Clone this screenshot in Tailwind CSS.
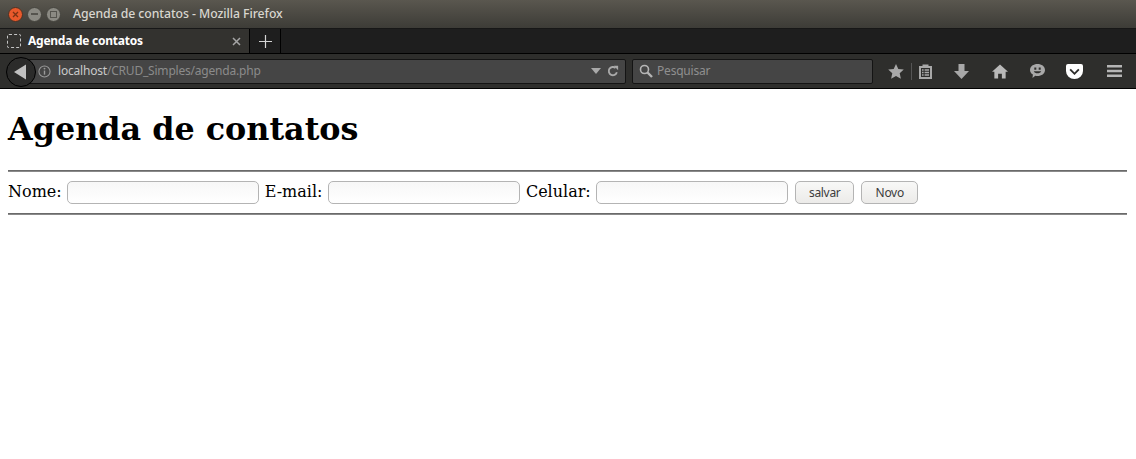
<!DOCTYPE html>
<html lang="pt-BR">
<head>
    <meta charset="UTF-8">
    <title>Agenda de contatos</title>
    <script src="https://cdn.jsdelivr.net/npm/@tailwindcss/browser@4"></script>
</head>
<body class="bg-white h-[459px] overflow-hidden font-['Noto_Sans',sans-serif]">
    <!-- barra de titulo -->
    <div class="h-[28px] flex items-center bg-gradient-to-b from-[#5a574f] to-[#3d3c37]">
        <div class="flex items-center gap-[4px] pl-[8px] w-[73px]">
            <span class="w-[15px] h-[15px] rounded-full bg-[#e9592b] border border-[#4a3225] flex items-center justify-center">
                <svg width="7" height="7" viewBox="0 0 7 7"><path d="M1 1l5 5M6 1l-5 5" stroke="#7a3214" stroke-width="1.3"/></svg>
            </span>
            <span class="w-[15px] h-[15px] rounded-full bg-[#8b8a83] border border-[#45443e] flex items-center justify-center">
                <span class="w-[7px] h-[2px] bg-[#55544e]"></span>
            </span>
            <span class="w-[15px] h-[15px] rounded-full bg-[#8b8a83] border border-[#45443e] flex items-center justify-center">
                <span class="w-[7px] h-[7px] border border-[#55544e]"></span>
            </span>
        </div>
        <span class="text-[12.25px] tracking-[-0.06px] font-medium text-[#d8d6cf] whitespace-nowrap">Agenda de contatos - Mozilla Firefox</span>
    </div>

    <!-- abas -->
    <div class="h-[25px] flex bg-[#1e1e1e] border-t border-[#171717]">
        <div class="w-[250px] flex items-center bg-[#33322f] border-r border-black pl-[7px] pr-[8px]">
            <span class="w-[14px] h-[14px] rounded-[2px] border border-dashed border-[#c4c4c4]"></span>
            <span class="ml-[7px] text-[12px] tracking-[-0.25px] font-bold text-white whitespace-nowrap">Agenda de contatos</span>
            <svg class="ml-auto" width="9" height="9" viewBox="0 0 9 9"><path d="M1 1l7 7M8 1l-7 7" stroke="#a5a5a5" stroke-width="1.5"/></svg>
        </div>
        <div class="w-[31px] flex items-center justify-center border-r border-black">
            <svg width="13" height="13" viewBox="0 0 13 13"><path d="M6.5 0v13M0 6.5h13" stroke="#d4d4d4" stroke-width="1.2"/></svg>
        </div>
    </div>

    <!-- navegacao -->
    <div class="relative h-[36px] flex items-center bg-[#2e2e2c] border-y border-black pl-[22px] pr-[14px]">
        <div class="absolute left-[6px] top-[3px] w-[30px] h-[30px] rounded-full bg-[#2b2b2a] border border-black flex items-center justify-center z-10">
            <svg class="mr-[2px]" width="14" height="16" viewBox="0 0 14 16"><path d="M1 8l12-7.500v15z" fill="#c0c0c0"/></svg>
        </div>
        <div class="w-[604px] h-[25px] flex items-center bg-[#454545] border border-[#141414] rounded-[2px] pl-[15px] pr-[6px]">
            <svg width="13" height="13" viewBox="0 0 14 14" fill="none"><circle cx="7" cy="7" r="6" stroke="#9a9a9a" stroke-width="1.1"/><path d="M7 6v4.400" stroke="#9a9a9a" stroke-width="1.5"/><circle cx="7" cy="3.900" r="1" fill="#9a9a9a"/></svg>
            <span class="ml-[7px] text-[12px] tracking-[-0.2px] text-[#c9c9c9] whitespace-nowrap">localhost<span class="text-[#8b8b8b]">/CRUD_Simples/agenda.php</span></span>
            <svg class="ml-auto" width="10" height="6" viewBox="0 0 10 6"><path d="M0 0h10l-5 6z" fill="#a9a9a9"/></svg>
            <svg class="ml-[6px]" width="12" height="12" viewBox="0 0 14 14" fill="none"><path d="M11.500 8.500A4.800 4.800 0 1 1 10 3.400" stroke="#a9a9a9" stroke-width="2.200"/><path d="M8 1h5v5z" fill="#a9a9a9"/></svg>
        </div>
        <div class="ml-[6px] w-[241px] h-[25px] flex items-center bg-[#454545] border border-[#141414] rounded-[2px] pl-[6px]">
            <svg width="14" height="14" viewBox="0 0 14 14" fill="none"><circle cx="5.500" cy="5.500" r="4" stroke="#b5b5b5" stroke-width="1.6"/><path d="M8.500 8.500l4.500 4.500" stroke="#b5b5b5" stroke-width="2.400"/></svg>
            <span class="ml-[4px] text-[12px] tracking-[-0.2px] text-[#8f8f8f]">Pesquisar</span>
        </div>
        <div class="ml-[15px] flex items-center">
            <svg width="16" height="15" viewBox="0 0 16 15"><path d="M8 0l2.300 5 5.500.6-4.100 3.700 1.200 5.500L8 12l-4.900 2.800 1.200-5.500L.2 5.600 5.700 5z" fill="#a8a8a8"/></svg>
            <span class="ml-[7px] w-px h-[17px] bg-[#555]"></span>
            <svg class="ml-[6px]" width="15" height="16" viewBox="0 0 15 16"><path fill-rule="evenodd" d="M1 3h3.500V1.500h6V3H14v13H1zM3 5v9h9V5zM4 6.300h1.600v1.400H4zM6.600 6.300H11v1.400H6.600zM4 8.800h1.600v1.400H4zM6.600 8.800H11v1.400H6.600zM4 11.300h1.600v1.400H4zM6.600 11.300H11v1.400H6.600z" fill="#a8a8a8"/></svg>
            <svg class="ml-[21px]" width="15" height="15" viewBox="0 0 15 15"><path d="M4.500 0h6v7H15l-7.500 8L0 7h4.500z" fill="#a8a8a8"/></svg>
            <svg class="ml-[23px]" width="16" height="15" viewBox="0 0 17 15"><path fill-rule="evenodd" d="M8.500 0l8.500 7.800h-2.500V15h-4v-5h-4v5h-4V7.800H0z" fill="#b8b8b8"/></svg>
            <svg class="ml-[22px]" width="15" height="14" viewBox="0 0 15 14"><path fill-rule="evenodd" d="M7.500 0C11.500 0 15 2.300 15 6s-3.500 6-7.500 6c-.8 0-1.500-.1-2.200-.3L2.500 14l.4-3.400C1 9.500 0 7.900 0 6 0 2.300 3.500 0 7.500 0zM4.300 3.600v2.200h2V3.600zM8.700 3.600v2.200h2V3.600zM3.800 7.200c1 2.800 6.400 2.800 7.400 0z" fill="#a8a8a8"/></svg>
            <svg class="ml-[21px]" width="17" height="15" viewBox="0 0 17 15"><path fill-rule="evenodd" d="M2 0h13a2 2 0 0 1 2 2v5a8.500 8 0 0 1-17 0V2a2 2 0 0 1 2-2zM4.800 4.800L3.500 6.100 8.500 11l5-4.900-1.300-1.300-3.700 3.600z" fill="#ffffff"/></svg>
            <svg class="ml-[24px]" width="15" height="12" viewBox="0 0 15 12"><path d="M0 0h15v2.400H0zM0 4.800h15v2.400H0zM0 9.600h15V12H0z" fill="#b5b5b5"/></svg>
        </div>
    </div>

    <!-- pagina -->
    <div class="pl-[8px] pr-[9px] font-['DejaVu_Serif',serif] text-[16px] text-black">
        <h1 class="mt-[21px] mb-[22px] text-[31.8px] leading-[38px] font-bold">Agenda de contatos</h1>
        <hr class="border-t border-b border-t-[#6a6a6a] border-b-[#8a8a8a]">
        <form class="h-[41px] flex items-center whitespace-nowrap">
            <label class="mb-[2px]">Nome:</label>
            <input type="text" class="ml-[5px] w-[192px] h-[23px] rounded-[5px] border border-[#b4b4b4] bg-gradient-to-b from-[#f7f7f7] to-white">
            <label class="ml-[6px] mb-[2px]">E-mail:</label>
            <input type="text" class="ml-[6px] w-[192px] h-[23px] rounded-[5px] border border-[#b4b4b4] bg-gradient-to-b from-[#f7f7f7] to-white">
            <label class="ml-[5.5px] mb-[2px]">Celular:</label>
            <input type="text" class="ml-[5.5px] w-[192px] h-[23px] rounded-[5px] border border-[#b4b4b4] bg-gradient-to-b from-[#f7f7f7] to-white">
            <button type="button" class="ml-[7px] w-[59px] h-[23px] rounded-[5px] border border-[#b4b4b4] bg-gradient-to-b from-[#f8f8f7] to-[#ecebe9] font-['Noto_Sans',sans-serif] text-[12px] tracking-[-0.3px] text-[#3c3c3c]">salvar</button>
            <button type="button" class="ml-[7px] w-[57px] h-[23px] rounded-[5px] border border-[#b4b4b4] bg-gradient-to-b from-[#f8f8f7] to-[#ecebe9] font-['Noto_Sans',sans-serif] text-[12px] tracking-[-0.3px] text-[#3c3c3c]">Novo</button>
        </form>
        <hr class="border-t border-b border-t-[#6a6a6a] border-b-[#8a8a8a]">
    </div>
</body>
</html>
